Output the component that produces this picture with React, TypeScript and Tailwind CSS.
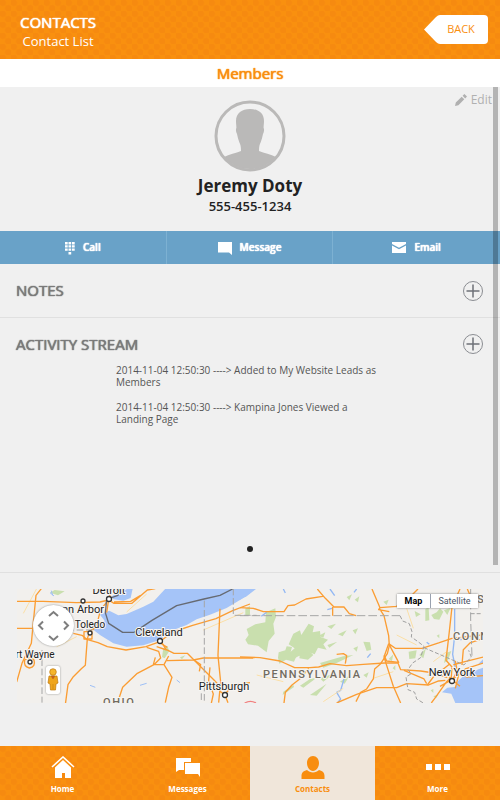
import React, { useState } from 'react'

const headerPattern = 'bg-[#f9900f] bg-[radial-gradient(circle_at_25%_25%,#f68a10_0_22%,transparent_34%),radial-gradient(circle_at_75%_75%,#f68a10_0_22%,transparent_34%)] bg-[length:11px_11px]'

// regular weight thickened a little, narrower than the real semibold
const thickText = '[text-shadow:0_0_1px_currentColor,0_0_1px_currentColor]'

const KeypadIcon = () => (
  <svg width="10" height="14" viewBox="0 0 10 14" fill="white">
    <path d="M0 1h2.700v2.400H0zM3.500 1h2.700v2.400H3.500zM7 1h2.700v2.400H7zM0 4.200h2.700v2.400H0zM3.500 4.200h2.700v2.400H3.500zM7 4.200h2.700v2.400H7zM0 7.400h2.700v2.400H0zM3.500 7.400h2.700v2.400H3.500zM7 7.400h2.700v2.400H7zM3.500 11h2.700v2.500H3.500z" />
  </svg>
)

const MessageIcon = () => (
  <svg width="14" height="14" viewBox="0 0 14 14" fill="white">
    <path d="M0 1h14v13l-3-2.500H0z" />
  </svg>
)

const EmailIcon = () => (
  <svg width="14" height="11" viewBox="0 0 14 11" fill="white">
    <path d="M0 0h14v2L7 5.800 0 2zM0 3.400l7 3.800 7-3.800V11H0z" />
  </svg>
)

const PencilIcon = () => (
  <svg width="12" height="12" viewBox="0 0 12 12" fill="#b0b0b0">
    <path d="M0 12l.8-3.400L6.700 2.700l2.600 2.600-5.900 5.900zM7.600 1.800L9.400 0 12 2.600l-1.800 1.800z" />
  </svg>
)

const Avatar = () => (
  <svg className="mx-auto" width="72" height="72" viewBox="0 0 72 72" role="img" aria-label="Jeremy Doty">
    <circle cx="36" cy="36" r="34" fill="#f1f1f1" />
    <path d="M36 9c-8 0-14 4-14 12 0 3 .4 4 .4 7-.8 1-.6 4 .6 6 .6 3 1.400 6 2.400 8.500 1 2 1.600 4 1.600 8.500C22 53 15 54.500 10 57A34 34 0 0 0 62 57C57 54.500 50 53 45 51c0-4.500.6-6.500 1.600-8.500 1-2.500 1.800-5.500 2.400-8.500 1.200-2 1.400-5 .6-6 0-3 .4-4 .4-7 0-8-6-12-14-12z" fill="#bab9b8" />
    <circle cx="36" cy="36" r="34" fill="none" stroke="#bab9b8" strokeWidth="3" />
  </svg>
)

const PlusIcon = () => (
  <svg width="21" height="20" viewBox="0 0 21 20" fill="none">
    <circle cx="10" cy="10" r="9.500" stroke="#8b8d92" />
    <path d="M10 3.500v13M3.500 10h13" stroke="#6d7077" strokeWidth="1.500" />
  </svg>
)

const HomeIcon = () => (
  <svg width="24" height="22" viewBox="0 0 24 22" fill="white">
    <path d="M4 11.500L12 4l8 7.500V22h-6v-5h-3v5H4z" />
    <path d="M1 11L12 1l11 10" fill="none" stroke="white" strokeWidth="1.600" />
  </svg>
)

const MessagesIcon = () => (
  <svg width="24" height="22" viewBox="0 0 24 22" fill="white">
    <path d="M0 2h15v4H8v8H3l-3 2zM9 7h15v14l-2-3H9z" />
  </svg>
)

const ContactsIcon = () => (
  <svg width="24" height="24" viewBox="0 0 24 24" fill="#f88d0f">
    <path d="M12 0c3.500 0 6 3 6 7s-2.500 8-6 8-6-4-6-8 2.500-7 6-7zM6 14c3 3.200 9 3.200 12 0 4 1 5.500 3 5.500 6v3H.5v-3c0-3 1.500-5 5.500-6z" />
  </svg>
)

const MoreIcon = () => (
  <svg width="24" height="22" viewBox="0 0 24 22" fill="white">
    <path d="M0 8h6v6H0zM9 8h6v6H9zM18 8h6v6h-6z" />
  </svg>
)

const tabs = [
  { name: 'Home', icon: <HomeIcon /> },
  { name: 'Messages', icon: <MessagesIcon /> },
  { name: 'Contacts', icon: <ContactsIcon /> },
  { name: 'More', icon: <MoreIcon /> },
]

const actions = [
  { name: 'Call', icon: <KeypadIcon /> },
  { name: 'Message', icon: <MessageIcon /> },
  { name: 'Email', icon: <EmailIcon /> },
]

const activities = [
  '2014-11-04 12:50:30 ----> Added to My Website Leads as Members',
  '2014-11-04 12:50:30 ----> Kampina Jones Viewed a Landing Page',
]

const cities = [
  { name: 'Detroit', x: 92, y: 5, size: 11 },
  { name: 'nn Arbor', x: 66, y: 24, size: 11 },
  { name: 'Toledo', x: 73, y: 39, size: 10 },
  { name: 'Cleveland', x: 142, y: 47, size: 11 },
  { name: 'rt Wayne', x: 18, y: 69, size: 10 },
  { name: 'Pittsburgh', x: 207, y: 101, size: 11 },
  { name: 'New York', x: 435, y: 87, size: 11 },
]

const MapDrawing = () => (
  <svg className="block w-full h-[114px] bg-[#f2f0ed] font-[Roboto,sans-serif]" viewBox="0 0 466 114" preserveAspectRatio="xMidYMid slice">
    {/* west part */}
    <g transform="translate(-7 -9) scale(0.3333)" fill="none" strokeLinejoin="round">
      <path d="M742 18L720 40 690 60 650 84 600 104 560 118 530 135 490 150 470 166 440 183 400 196 350 200 310 190 270 165 248 148 258 130 284 122 270 104 298 92 325 106 350 102 400 80 430 65 470 22z" fill="#a5c4f8" />
      <path d="M320 26h48l-6 28-22 8-28-4-10-6 14-10z" fill="#a5c4f8" />
      <path d="M120 38l14-8 30 4-20 12zM460 205l12-6 6 14-14 22-8-4zM510 232l16-6-10 12zM706 86l14-8v26l-14 4z" fill="#c9dfae" />
      <path d="M120 38l12 10M124 32l4 14M150 96l14 10M240 316l16 6M390 316l20-6M500 300l10 8" stroke="#9dbff6" strokeWidth="3" />
      <g stroke="#fbdfa6" strokeWidth="3">
        <path d="M80 26L40 100M350 96l60-54M580 150l120-52M200 170l-60 30" />
      </g>
      <g stroke="#fb9d33" strokeWidth="4">
        <path d="M20 64l80 0 100 4 70-2 26-6M94 26l-16 20-8 80-6 64-28 60-16 56M20 145h60l80 4" />
        <path d="M296 60l-24 28-10 40-24 30-6 18-6 80-12 10-24 24-16 24-8 60" />
        <path d="M296 60l16 10 54 0 46-40 24-4M296 58l-6 40M302 28l-4 30M312 66l50-2 30-18" />
        <path d="M190 160l26 6 14 12 34 10 28 12 56 10 60-10 40-14 40-30 60-20 70-20 50-24 52-20" />
        <path d="M222 155h24v22h-24zM248 150l10-12" />
        <path d="M410 202l36 12 6 20-20 20-50 26-44 42-16 48M452 182l16 26 24 12 40 0 20 20 30 30 30 30 30 32M436 232l-6 22h32l14-26M462 254l24 38-10 30-10 46" />
        <path d="M470 242l80-2 30-6h150M552 240l20 14-4 20M446 186l26 16M440 200l30 10" />
        <path d="M630 86l-6 140 8 80-6 62M600 262l-4 40 14 40-6 28M644 342l30-28 46-6M644 342l10 26M610 316l30 26" />
        <path d="M44 240q18-14 28 0 6 20-14 24-18-4-14-24z" />
      </g>
      <path d="M330 26l-6 20-34 12-4 40 10 32 42 27h34l54-36 74-44 82-20 48-11 38-19" stroke="#666a72" strokeWidth="4" />
      <path d="M248 150h-60M96 210v158M583 62v310M670 26v80h70M574 340v28" stroke="#a6a6a6" strokeWidth="3" strokeDasharray="20 8" />
    </g>

    {/* east part */}
    <g transform="translate(223 -54) scale(0.3333)" fill="none" strokeLinejoin="round">
      <path d="M0 162h48L20 184 0 194z" fill="#a5c4f8" />
      <path d="M730 372v132h-84l-12-28-28-4 16-14 22-2 10-18 24-22 26-18z" fill="#a5c4f8" />
      <path d="M640 418l24-16 40-14 26-2v12l-36 12-40 14z" fill="#f2f0ed" />
      <g fill="#c9dfae">
        <path d="M78 232l28-12 2 26-8 20 4 30-18 22-6 34-26-20-30-4-8-14 10-14-6-18 26-14 30-6z" />
        <path d="M160 296l20-10 4 14 22-34 16 8-4 18 22-4 2 18 22 8-14 14 10 16-26-6-10 20-20-8-6 22-20-10-14 8-12-20 12-10-18-12z" />
        <path d="M116 352l20-6 4-12 16 2-4 14 20 8-10 22-24-6-20 12-4-18zM180 356l28-8 12 12-16 14-26-4z" />
        <path d="M236 302l20-10-6 16zM262 274l26-8-14 16zM294 298l26-12-12 18zM338 286l16-6-8 18zM340 340l14-6-4 16zM370 320l20 2 4 22-14 4zM262 330l30-10-24 18zM240 384l70-20 30-4-50 24-40 14z" />
        <path d="M320 186l16-8-8 18zM344 194l14-10-4 18zM430 200l16-6-6 16zM446 372l14-14-4 20zM458 400l8-10v16zM506 350l24-4-4 24-18 2zM538 360l20-20-8 30zM524 228l18 10-14 8zM556 222l10-6 2 40-12 2zM574 240l16-8 10-12 10 10-12 24-16-2zM612 226l20-8-10 22zM618 354l16-6-10 28-12 8zM562 420l14-8-4 16zM572 466l8-4v12zM590 302l8-4v12zM580 484l16-6-8 12z" />
        <path d="M130 470l30-20 2 6-34 24zM180 452l30-20 20-4-40 30zM240 430l40-14-30 24zM210 480l50-34-30 36zM300 440l30-20-16 26zM370 420l16-8-6 16z" />
      </g>
      <path d="M64 244l16-12M130 162l6 12M270 162l14 20M262 224l14-4M350 162l-8 10M312 432l-10 34-12 6 12 20-8 10M392 356l-10 12M644 222v80l-6 56 8 40M560 322l8 6M480 202l-6 10M660 308l4 8" stroke="#93b8f4" strokeWidth="4" />
      <g stroke="#fbdfa6" strokeWidth="3">
        <path d="M50 420l80 20M250 500l60-40M470 300l60 30M500 220l20 60M580 380l40-30M400 430l60-20" />
      </g>
      <g stroke="#fb9d33" strokeWidth="4">
        <path d="M0 218l40 2 30 10h62l12-18 20-2 34-18 50-8M232 162l24 28 26 26h30l16 20 20 6M278 216v26" />
        <path d="M396 162l24 56-4 6 32 6M418 220l14 22 14 60 2 30-6 24-20 30-18 16-4 30-20 30-18 10-14 28" />
        <path d="M420 218l50-4 12-12" />
        <path d="M0 366l60 2 60 10 44 20 46 0 26-2 34-10 50 6 50-4 64-4 40 0 8 20 60 4 40 6 40 14" />
        <path d="M206 400l-24 30-26 20-20 22-4 32M316 386l4-24-10-6-20 2" />
        <path d="M446 326l20 14 80 0 50-16 40-14 90-10M446 326l-14 40 14 44 14 44 22 50M446 326l30 56-36-4-8-18" />
        <path d="M290 504l60-26 60-20 60 0 30-12 66 4 30-12 20-2" />
        <path d="M660 162l-24 54-8 74-10 86 18 20-2 30-14 14-34 48-12 16M640 400l40 26 50-4M636 434l40-32 54-18M640 430l12-22-6-30M562 450l18-24 50-40M600 454l36-20 24 20M636 434l-20-20M656 420l-10 40M640 390l26-8 64-16M666 390l4-46 20-20 40-14M560 446l-8-14-60-26M690 180l-8-18" />
        <path d="M494 202l40-40" />
      </g>
      <path d="M0 242h480M692 162v90l4 110" stroke="#a6a6a6" strokeWidth="3" strokeDasharray="26 9" />
      <path d="M480 242l8 16 20 8 8 24-2 16 20 14 18 14-10 34-24 16-14 20 10 12-16 10 6 38 20 8 6 20 20 12M552 338l120 52 22-24-8-20M722 236h-30" stroke="#a0a0a0" strokeWidth="3" strokeDasharray="12 6" />
      <path d="M14 504q18-10 34 0" stroke="#f08080" strokeWidth="4" />
    </g>

    <g fill="white" stroke="#333" strokeWidth="1.300">
      <circle cx="92" cy="10" r="2.500" />
      <circle cx="66" cy="12" r="2" />
      <circle cx="73" cy="44" r="2" />
      <circle cx="143" cy="52" r="2.500" />
      <circle cx="13" cy="73" r="2" />
      <circle cx="208" cy="106" r="2.500" />
      <circle cx="435" cy="92" r="2.500" />
    </g>
    <g textAnchor="middle" stroke="#f7f5f2" strokeWidth="2" paintOrder="stroke" fill="#222">
      {cities.map((city) => (
        <text key={city.name} x={city.x} y={city.y} fontSize={city.size}>{city.name}</text>
      ))}
    </g>
    <g className="tracking-widest" stroke="#f7f5f2" strokeWidth="2" paintOrder="stroke" fill="#716b60" fontWeight="500">
      <text x="86" y="117" fontSize="11">OHIO</text>
      <text x="246" y="89" fontSize="11">PENNSYLVANIA</text>
      <text x="436" y="51" fontSize="11">CONN</text>
      <text x="460" y="14" fontSize="11">S</text>
    </g>
  </svg>
)

const MapPanel = () => {
  const [mapType, setMapType] = useState('Map')

  return (
    <div className="relative overflow-hidden">
      <MapDrawing />

      <button aria-label="Pan map" className="absolute left-4 top-4 size-[41px] rounded-full bg-white shadow-[0_0_2px_#888]">
        <svg width="41" height="41" viewBox="0 0 41 41" fill="none" stroke="#7e7e7e" strokeWidth="2">
          <path d="M16 11l4.500-4 4.500 4M16 31l4.500 4 4.500-4M10 16.500l-4 4 4 4M31 16.500l4 4-4 4" />
        </svg>
      </button>

      <button aria-label="Street View" className="absolute left-[29px] top-[77px] flex justify-center w-[14px] h-7 bg-white rounded-xs shadow-[0_0_2px_#888]">
        <svg width="12" height="26" viewBox="0 0 12 26">
          <path d="M2 10h8l1 7-2 1-.5 6h-5L3 18l-2-1z" fill="#efa51c" stroke="#bd7910" strokeWidth=".7" />
          <circle cx="6" cy="6" r="3.300" fill="#f5b52c" stroke="#bd7910" strokeWidth=".7" />
          <path d="M4 10h4l-2 3zM6 18v5" fill="#c9502c" stroke="#bd7910" strokeWidth=".6" />
        </svg>
      </button>

      <div className="absolute right-[5px] top-[5px] flex h-[14px] bg-white font-[Roboto,sans-serif] text-[9px] leading-[14px] shadow-[0_0_2px_#777]">
        <button onClick={() => setMapType('Map')} className={`w-[34px] border-r border-gray-400 ${mapType === 'Map' ? 'font-bold text-black' : 'text-gray-600'}`}>Map</button>
        <button onClick={() => setMapType('Satellite')} className={`w-[47px] ${mapType === 'Satellite' ? 'font-bold text-black' : 'text-gray-600'}`}>Satellite</button>
      </div>
    </div>
  )
}

const App = () => {
  const [activeTab, setActiveTab] = useState('Contacts')

  return (
    <div className="flex flex-col min-h-screen bg-[#f0f0f0] font-['Open_Sans',sans-serif]">
      <header className={`flex justify-between items-center h-[59px] pl-5 pr-3 ${headerPattern}`}>
        <div className="pt-[2px] text-white text-center">
          <h1 className={`text-[15px] leading-5 ${thickText}`}>CONTACTS</h1>
          <p className="text-[13px] leading-[18px]">Contact List</p>
        </div>
        <button className="relative w-16 h-[29px] pl-[10px] text-[11px] text-[#f98e0f]">
          <svg className="absolute inset-0" width="64" height="29" viewBox="0 0 64 29" fill="white">
            <path d="M0 14.500L12 2q2-2 4-2h44q4 0 4 4v21q0 4-4 4H16q-2 0-4-2z" />
          </svg>
          <span className="relative">BACK</span>
        </button>
      </header>

      <h2 className={`h-7 bg-white text-center text-[15px] leading-7 text-[#f98e0f] ${thickText}`}>Members</h2>

      <main className="relative flex-1">
        <div className="absolute right-[2px] top-0 w-[5px] h-[478px] bg-black/25"></div>

        <section className="relative h-36 pt-[13px] text-center text-[#222]">
          <button className="absolute right-2 top-1 flex items-center gap-1 text-xs leading-[18px] text-[#b0b0b0]">
            <PencilIcon />
            Edit
          </button>
          <Avatar />
          <p className="pt-[2px] text-[17px] leading-6 font-bold">Jeremy Doty</p>
          <p className="text-[13px] leading-4 font-semibold">555-455-1234</p>
        </section>

        <div className="grid grid-cols-3 h-[33px] bg-[#69a2c8] divide-x divide-[#7db1d2]">
          {actions.map((action) => (
            <button key={action.name} className={`flex justify-center items-center gap-2 text-[10px] font-semibold text-white ${thickText}`}>
              {action.icon}
              {action.name}
            </button>
          ))}
        </div>

        <section className="flex justify-between items-center h-[54px] px-4 border-b border-[#e0e0e0]">
          <h3 className={`text-[15px] text-[#7a7a7a] ${thickText}`}>NOTES</h3>
          <button aria-label="Add note"><PlusIcon /></button>
        </section>

        <section className="h-[255px] px-4 border-b border-[#e0e0e0]">
          <div className="flex justify-between items-center h-[46px] pt-[6px]">
            <h3 className={`text-[15px] text-[#7a7a7a] ${thickText}`}>ACTIVITY STREAM</h3>
            <button aria-label="Add activity"><PlusIcon /></button>
          </div>
          <ul className="flex flex-col gap-[13px] w-[268px] mx-auto text-[10px] leading-3 text-[#555]">
            {activities.map((activity) => (
              <li key={activity}>{activity}</li>
            ))}
          </ul>
          <div className="size-[6px] mx-auto mt-[121px] rounded-full bg-[#222]"></div>
        </section>

        <section className="px-[17px] py-4">
          <MapPanel />
        </section>
      </main>

      <nav className={`grid grid-cols-4 h-[54px] ${headerPattern}`}>
        {tabs.map((tab) => (
          <button
            key={tab.name}
            onClick={() => setActiveTab(tab.name)}
            className={`flex flex-col items-center pt-[10px] text-[8px] font-bold ${activeTab === tab.name ? 'bg-[#f0e6da] text-[#f98e0f]' : 'text-white'}`}
          >
            <span className="h-6">{tab.icon}</span>
            <span className="leading-[18px]">{tab.name}</span>
          </button>
        ))}
      </nav>
    </div>
  )
}

export default App
